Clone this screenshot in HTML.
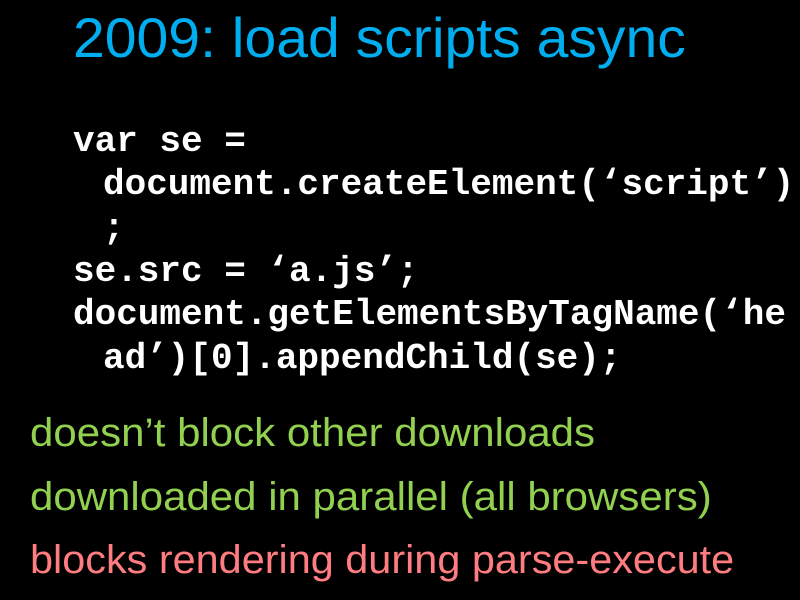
<!DOCTYPE html>
<html><head><meta charset="utf-8"><style>
html,body{margin:0;padding:0;background:#000;width:800px;height:600px;overflow:hidden}
.t{position:absolute;left:73px;top:10px;font:56px/1 "Liberation Sans",sans-serif;color:#00aeef;white-space:nowrap;transform:scaleX(1.02);transform-origin:0 0}
.c{position:absolute;left:73px;font:bold 36px/43.5px "Liberation Mono",monospace;color:#fff;white-space:nowrap}
.b{position:absolute;left:30px;font:40px/1 "Liberation Sans",sans-serif;white-space:nowrap;transform-origin:0 0}
.g{color:#92d050}.r{color:#ff7c80}
</style></head><body>
<div class="t">2009: load scripts async</div>
<div class="c" style="top:120px">var se =</div>
<div class="c" style="top:163px;left:103px">document.createElement(‘script’)</div>
<div class="c" style="top:207px;left:103px">;</div>
<div class="c" style="top:250px">se.src = ‘a.js’;</div>
<div class="c" style="top:293px">document.getElementsByTagName(‘he</div>
<div class="c" style="top:337px;left:103px">ad’)[0].appendChild(se);</div>
<div class="b g" style="top:413px;transform:scaleX(1.05)">doesn’t block other downloads</div>
<div class="b g" style="top:477px;transform:scaleX(1.05)">downloaded in parallel (all browsers)</div>
<div class="b r" style="top:540px;transform:scaleX(1.035)">blocks rendering during parse-execute</div>
</body></html>
